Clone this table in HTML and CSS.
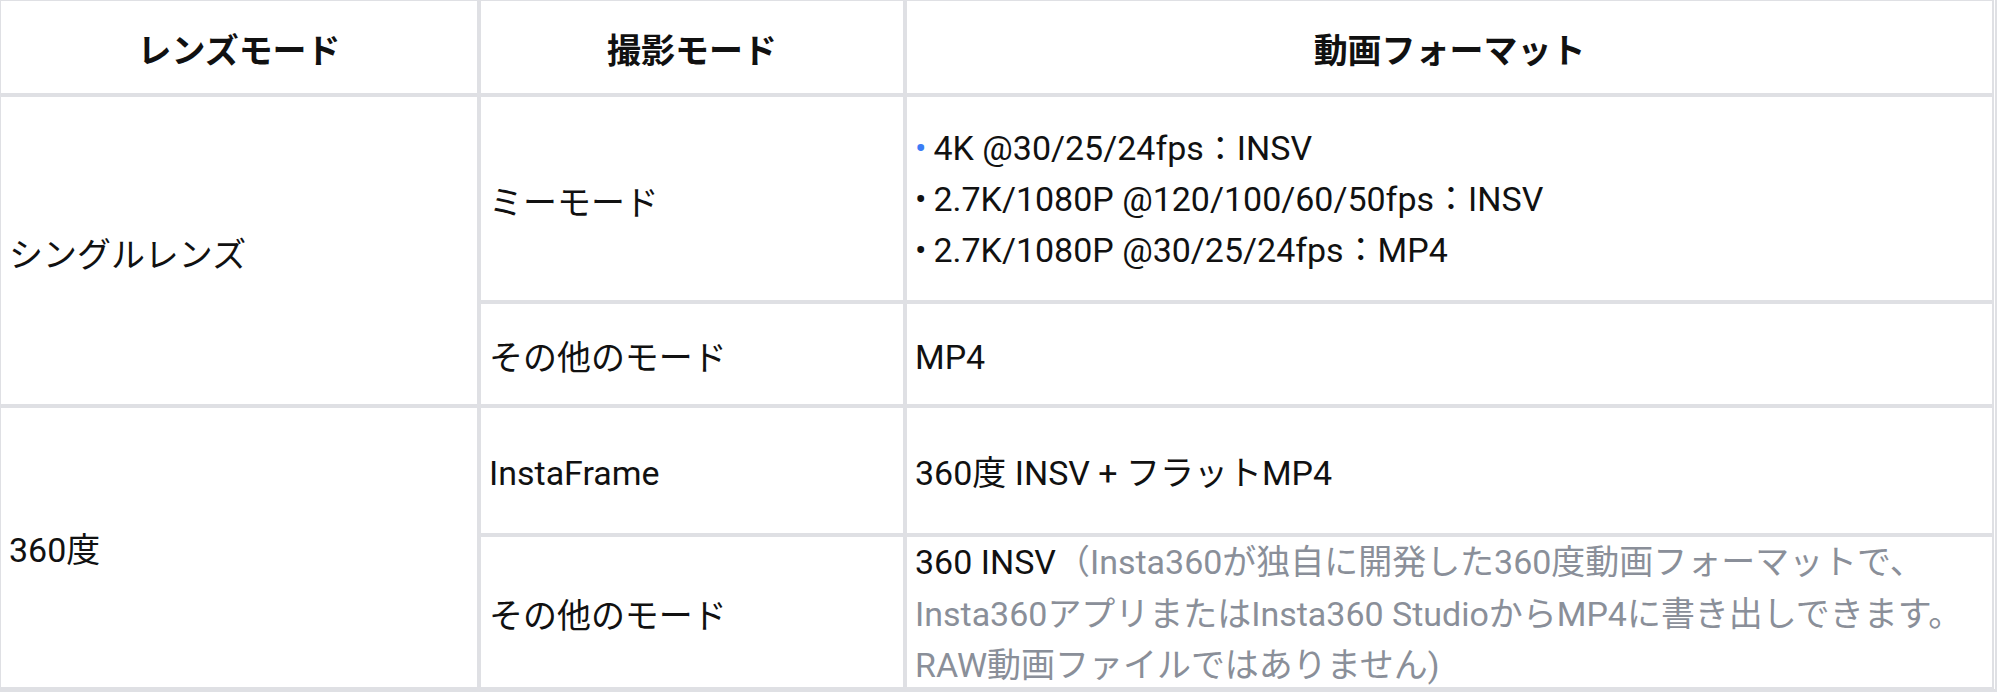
FILE: index.html
```html
<!DOCTYPE html>
<html lang="ja">
<head>
<meta charset="utf-8">
<title>動画フォーマット</title>
<link rel="stylesheet" href="styles.css">
</head>
<body>
<div class="spec-table">
  <div class="cell head">レンズモード</div>
  <div class="cell head">撮影モード</div>
  <div class="cell head">動画フォーマット</div>

  <div class="cell span2 jp">シングルレンズ</div>
  <div class="cell jp">ミーモード</div>
  <div class="cell list">
    <div><span class="dot blue">•</span>4K @30/25/24fps<span class="sc">：</span>INSV</div>
    <div><span class="dot">•</span>2.7K/1080P @120/100/60/50fps：INSV</div>
    <div><span class="dot">•</span>2.7K/1080P @30/25/24fps：MP4</div>
  </div>
  <div class="cell jp">その他のモード</div>
  <div class="cell">MP4</div>

  <div class="cell span2">360度</div>
  <div class="cell">InstaFrame</div>
  <div class="cell">360度 INSV + フラットMP4</div>
  <div class="cell jp">その他のモード</div>
  <div class="cell top">
    <p class="note">360 INSV<span class="muted">（Insta360が独自に開発した360度動画フォーマットで、<br>Insta360アプリまたはInsta360 StudioからMP4に書き出しできます。<br>RAW動画ファイルではありません)</span></p>
  </div>
</div>
</body>
</html>
```

FILE: styles.css
```css
html, body {
  margin: 0;
  padding: 0;
  background: #ffffff;
  overflow: hidden;
}

body {
  font-family: Roboto, "Noto Sans CJK JP", sans-serif;
  font-size: 34px;
  font-size-adjust: 0.528;
  color: #111111;
}

.spec-table {
  display: grid;
  grid-template-columns: 480px 426px 1089px;
  grid-template-rows: 96px 207px 104px 129px 154px;
  margin: -1px 0 0 -1px;
  border-right: 2px solid #dfe0e4;
  border-bottom: 3px solid #dfe0e4;
}

.cell {
  box-sizing: border-box;
  border: 2px solid #dfe0e4;
  display: flex;
  align-items: center;
  padding: 6px 8px 0 8px;
  line-height: 47px;
  white-space: nowrap;
}

.head {
  justify-content: center;
  font-weight: 700;
  padding: 8px 8px 0 8px;
}

.jp {
  padding-top: 9px;
}

.span2 {
  grid-row: span 2;
}

.list {
  flex-direction: column;
  align-items: flex-start;
  justify-content: center;
  padding-top: 0;
  line-height: 51px;
}

.dot {
  margin-right: 7px;
}

.blue {
  color: #3b7cf6;
}

.sc {
  font-family: "Noto Sans CJK SC", sans-serif;
}

.top {
  align-items: flex-start;
  padding-top: 0;
}

.note {
  margin: 0;
  line-height: 51.6px;
}

.muted {
  color: #8a8f99;
}
```
